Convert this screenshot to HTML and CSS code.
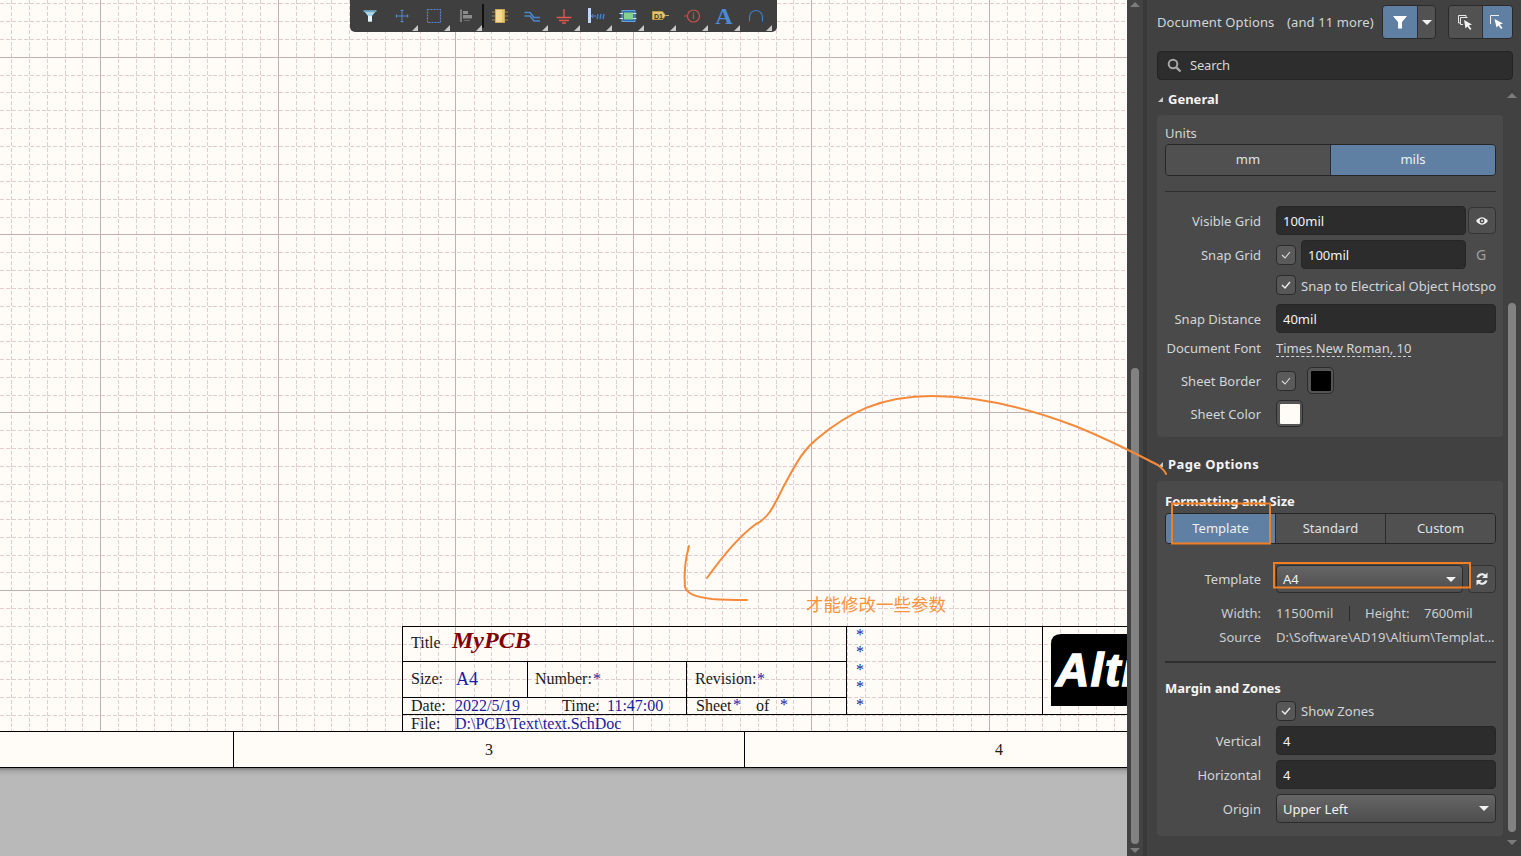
FILE: index.html
```html
<!DOCTYPE html>
<html lang="en">
<head>
<meta charset="utf-8">
<title>Document Options</title>
<link rel="stylesheet" href="styles.css">
</head>
<body>
<div class="app">
  <main class="canvas">
    <svg class="sheet" width="1127" height="768" viewBox="0 0 1127 768">
      <rect class="paper" width="1127" height="768"/>
      <path class="grid-minor" d="M11.5 0V731M29.5 0V731M47.5 0V731M65.5 0V731M82.5 0V731M118.5 0V731M136.5 0V731M154.5 0V731M171.5 0V731M189.5 0V731M207.5 0V731M225.5 0V731M242.5 0V731M260.5 0V731M296.5 0V731M314.5 0V731M331.5 0V731M349.5 0V731M367.5 0V731M385.5 0V731M402.5 0V731M420.5 0V731M438.5 0V731M474.5 0V731M491.5 0V731M509.5 0V731M527.5 0V731M545.5 0V731M562.5 0V731M580.5 0V731M598.5 0V731M616.5 0V731M651.5 0V731M669.5 0V731M687.5 0V731M705.5 0V731M722.5 0V731M740.5 0V731M758.5 0V731M776.5 0V731M793.5 0V731M829.5 0V731M847.5 0V731M865.5 0V731M882.5 0V731M900.5 0V731M918.5 0V731M936.5 0V731M953.5 0V731M971.5 0V731M1007.5 0V731M1025.5 0V731M1042.5 0V731M1060.5 0V731M1078.5 0V731M1096.5 0V731M1114.5 0V731"/>
      <path class="grid-minor" d="M0 3.5H1127M0 21.5H1127M0 39.5H1127M0 75.5H1127M0 92.5H1127M0 110.5H1127M0 128.5H1127M0 146.5H1127M0 164.5H1127M0 181.5H1127M0 199.5H1127M0 217.5H1127M0 252.5H1127M0 270.5H1127M0 288.5H1127M0 306.5H1127M0 324.5H1127M0 341.5H1127M0 359.5H1127M0 377.5H1127M0 395.5H1127M0 430.5H1127M0 448.5H1127M0 466.5H1127M0 484.5H1127M0 501.5H1127M0 519.5H1127M0 537.5H1127M0 555.5H1127M0 572.5H1127M0 608.5H1127M0 626.5H1127M0 644.5H1127M0 661.5H1127M0 679.5H1127M0 697.5H1127M0 715.5H1127"/>
      <path class="grid-major" d="M100.5 0V731M278.5 0V731M455.5 0V731M633.5 0V731M811.5 0V731M989.5 0V731M0 57.5H1127M0 234.5H1127M0 412.5H1127M0 590.5H1127"/>
      <path class="ink" d="M402.5 731V626.5H1127M402.5 661.5H846.5M402.5 697.5H846.5M402.5 714.5H1127M527.5 661.5V697.5M686.5 661.5V714.5M846.5 626.5V714.5M1042.5 626.5V714.5M0 731.5H1127M0 767.5H1127M233.5 731V767M744.5 731V767"/>
      <path class="logo-bg" d="M1061 634H1127V706H1051V644Q1051 634 1061 634Z"/>
      <text class="logo-text" x="1056" y="686">Alti</text>
      <text class="lbl" x="411" y="648">Title</text>
      <text class="doc-title" x="452" y="648">MyPCB</text>
      <text class="lbl" x="411" y="684">Size:</text>
      <text class="val big" x="456" y="685">A4</text>
      <text class="lbl" x="535" y="684">Number:</text>
      <text class="val" x="593" y="684">*</text>
      <text class="lbl" x="695" y="684">Revision:</text>
      <text class="val" x="757" y="684">*</text>
      <text class="lbl" x="411" y="711">Date:</text>
      <text class="val" x="455" y="711">2022/5/19</text>
      <text class="lbl" x="562" y="711">Time:</text>
      <text class="val" x="607" y="711">11:47:00</text>
      <text class="lbl" x="696" y="711">Sheet</text>
      <text class="val" x="733" y="710">*</text>
      <text class="lbl" x="756" y="711">of</text>
      <text class="val" x="780" y="710">*</text>
      <text class="lbl" x="411" y="729">File:</text>
      <text class="val" x="455" y="729">D:\PCB\Text\text.SchDoc</text>
      <text class="val" x="856" y="640">*</text>
      <text class="val" x="856" y="657">*</text>
      <text class="val" x="856" y="675">*</text>
      <text class="val" x="856" y="692">*</text>
      <text class="val" x="856" y="710">*</text>
      <text class="lbl" x="485" y="755">3</text>
      <text class="lbl" x="995" y="755">4</text>
    </svg>
    <div class="desk"></div>
    <nav class="toolbar">
      <span class="tool"><svg width="20" height="20" viewBox="0 0 20 20"><path d="M3.500 4.500H16.500L12 10V15.500H8V10Z" fill="#a8d6e8"/><path d="M8 10H12V15.500H8Z" fill="#e4f3f8"/><path d="M3.500 4.500H16.500V6H3.500Z" fill="#6fa9c4"/></svg></span>
      <span class="tool more"><svg width="20" height="20" viewBox="0 0 20 20"><path d="M10 3.500V16.500M3.500 10H16.500M8.500 4.500H11.500M8.500 15.500H11.500M4.500 8.500V11.500M15.500 8.500V11.500" stroke="#5b86d0" fill="none"/></svg></span>
      <span class="tool more"><svg width="20" height="20" viewBox="0 0 20 20"><rect x="3.500" y="3.500" width="13" height="13" fill="none" stroke="#5b86d0" stroke-width="1.200" stroke-dasharray="2 1"/></svg></span>
      <span class="tool more"><svg width="20" height="20" viewBox="0 0 20 20"><path d="M4 3.500H6V16H4Z" fill="#7d7d7d"/><path d="M7 5H12V8H7ZM7 9H16V12.500H7Z" fill="#8c8c8c"/><path d="M8 14.500H14" stroke="#6c6c6c"/></svg></span>
      <span class="tool-sep"></span>
      <span class="tool"><svg width="20" height="20" viewBox="0 0 20 20"><path d="M2 6H18M2 10H18M2 14H18" stroke="#a08a50"/><rect x="5.500" y="3.500" width="9" height="13" fill="#f7d98e" stroke="#c9a862"/><rect x="12" y="4" width="2" height="12" fill="#e9c26f"/></svg></span>
      <span class="tool more"><svg width="20" height="20" viewBox="0 0 20 20"><path d="M2.500 6.500H8L12 11.500H18M2.500 10H8L12 15H18" stroke="#4a86c8" fill="none" stroke-width="1.700"/></svg></span>
      <span class="tool more"><svg width="20" height="20" viewBox="0 0 20 20"><path d="M10 3V11M2.500 11.500H17.500M5 14.500H15M8 17H12" stroke="#e05a50" fill="none" stroke-width="1.300"/></svg></span>
      <span class="tool more"><svg width="20" height="20" viewBox="0 0 20 20"><rect x="2" y="2" width="3" height="15" fill="#bcd8f6"/><path d="M5 10H10M7 8L5.500 10L7 12" stroke="#5b86d0" fill="none"/><path d="M11 13L12 8M14 13L15 8M17 13L18 8" stroke="#4a7fd0" stroke-width="1.400"/></svg></span>
      <span class="tool more"><svg width="20" height="20" viewBox="0 0 20 20"><rect x="4" y="4.500" width="13" height="11" fill="#2e6fb0" stroke="#6aa0d8"/><rect x="6" y="6.500" width="9" height="7" fill="#86cf8c"/><path d="M1.500 7.500H5M1.500 12.500H5M15 7.500H18.500M15 12.500H18.500" stroke="#cfe6f7"/></svg></span>
      <span class="tool more"><svg width="20" height="20" viewBox="0 0 20 20"><path d="M2.500 5.500H12.500L15.500 9.500L12.500 13.500H2.500Z" fill="#e3c56f" stroke="#b59a4a"/><path d="M15.500 9.500H19" stroke="#c7a95c"/><text class="net-text" x="4" y="12.500">D1</text></svg></span>
      <span class="tool more"><svg width="20" height="20" viewBox="0 0 20 20"><circle cx="11.500" cy="10" r="6" fill="none" stroke="#c9504e" stroke-width="1.200"/><path d="M2 10H5.500M11.500 8.500V13M11.500 6.500V7.700" stroke="#c9504e" stroke-width="1.200"/></svg></span>
      <span class="tool more"><span class="tool-a">A</span></span>
      <span class="tool more"><svg width="20" height="20" viewBox="0 0 20 20"><path d="M3.500 15.500V11A6.500 6.500 0 0 1 16.500 11V15.500" fill="none" stroke="#3f7ec0" stroke-width="1.200"/></svg></span>
    </nav>
  </main>

  <aside class="rail">
    <span class="arrow-up"></span>
    <span class="rail-track"></span>
    <span class="rail-thumb"></span>
    <span class="arrow-down"></span>
  </aside>

  <section class="panel">
    <header class="panel-head">
      <span class="doc-name">Document Options</span>
      <span class="doc-more">(and 11 more)</span>
      <div class="btn-group filter-group">
        <span class="gbtn blue w35"><svg width="16" height="16" viewBox="0 0 16 16"><path d="M1 2H15L10 8V14.500H6V8Z" fill="#fff"/></svg></span>
        <span class="gbtn w18"><span class="caret"></span></span>
      </div>
      <div class="btn-group pick-group">
        <span class="gbtn w33"><svg width="17" height="17" viewBox="0 0 17 17"><path d="M1.500 1.500H9V3M1.500 1.500V9H3M3.500 3.500H10.500M3.500 3.500V10.500H6" fill="none" stroke="#e8e8e8"/><path d="M7 6L15 10.500L11.800 11.500L14.500 15L13 16L10.500 12.500L8.500 14.500Z" fill="#f2f2f2"/></svg></span>
        <span class="gbtn blue grow"><svg width="17" height="17" viewBox="0 0 17 17"><path d="M1.500 10V1.500H10" fill="none" stroke="#f0f0f0"/><path d="M5.500 5L14 9.500L10.800 10.500L13.500 14L12 15L9.500 11.500L7.500 13.500Z" fill="#fff"/></svg></span>
      </div>
    </header>

    <div class="search">
      <svg width="15" height="15" viewBox="0 0 15 15"><circle cx="6" cy="6" r="4.300" fill="none" stroke="#a6a6a6" stroke-width="2"/><path d="M9.300 9.300L13.500 13.500" stroke="#a6a6a6" stroke-width="2.400"/></svg>
      <span class="search-text">Search</span>
    </div>

    <h2 class="sect-head general"><span class="tri"></span>General</h2>
    <div class="box box-general">
      <div class="units-label">Units</div>
      <div class="seg seg-units"><span class="seg-item">mm</span><span class="seg-item on">mils</span></div>
      <div class="divider d-units"></div>

      <div class="row h29 mt14"><span class="lab">Visible Grid</span><span class="field w190">100mil</span><span class="icon-btn"><svg width="14" height="12" viewBox="0 0 14 12"><path d="M1 6Q7 -1.500 13 6Q7 13.500 1 6Z" fill="#eee"/><circle cx="7" cy="6" r="2.400" fill="#4a4a4a"/><circle cx="7" cy="6" r="1" fill="#eee"/></svg></span></div>
      <div class="row h29 mt5"><span class="lab">Snap Grid</span><span class="check dim"><svg width="12" height="10" viewBox="0 0 12 10"><path d="M2 5L5 8L10 2" fill="none" stroke="#ddd" stroke-width="1.100"/></svg></span><span class="field w165 ml5">100mil</span><span class="hotkey">G</span></div>
      <div class="row h20 mt6"><span class="lab"></span><span class="check"><svg width="12" height="10" viewBox="0 0 12 10"><path d="M2 5L5 8L10 2" fill="none" stroke="#eee" stroke-width="1.400"/></svg></span><span class="check-text hot-text">Snap to Electrical Object Hotspo</span></div>
      <div class="row h29 mt9"><span class="lab">Snap Distance</span><span class="field grow">40mil</span></div>
      <div class="row h20 mt5"><span class="lab">Document Font</span><span class="font-link">Times New Roman, 10</span></div>
      <div class="row h27 mt9"><span class="lab">Sheet Border</span><span class="check dim"><svg width="12" height="10" viewBox="0 0 12 10"><path d="M2 5L5 8L10 2" fill="none" stroke="#ddd" stroke-width="1.100"/></svg></span><span class="swatch ml11"><i class="swatch-black"></i></span></div>
      <div class="row h27 mt6"><span class="lab">Sheet Color</span><span class="swatch"><i class="swatch-white"></i></span></div>
    </div>

    <h2 class="sect-head page"><span class="tri"></span>Page Options</h2>
    <div class="box box-page">
      <h3 class="sub-head">Formatting and Size</h3>
      <div class="seg seg-format"><span class="seg-item on">Template</span><span class="seg-item">Standard</span><span class="seg-item">Custom</span></div>

      <div class="row h28 mt21"><span class="lab">Template</span><span class="select w187">A4<span class="caret"></span></span><span class="icon-btn swap"><svg width="14" height="16" viewBox="0 0 14 16"><path d="M1.500 6.500A5.500 5.500 0 0 1 10.500 3.500L12.500 1.500V7H7L9 5A3.300 3.300 0 0 0 4 6.500Z" fill="#eee"/><path d="M12.500 9.500A5.500 5.500 0 0 1 3.500 12.500L1.500 14.500V9H7L5 11A3.300 3.300 0 0 0 10 9.500Z" fill="#eee"/></svg></span></div>
      <div class="row h20 mt10 info"><span class="lab">Width:</span><span class="w-val">11500mil</span><span class="vbar"></span><span class="h-lab">Height:</span><span>7600mil</span></div>
      <div class="row h20 mt4 info"><span class="lab">Source</span><span class="source">D:\Software\AD19\Altium\Templat...</span></div>
      <div class="divider d-page"></div>
      <h3 class="sub-head margin-head">Margin and Zones</h3>
      <div class="row h20 mt4"><span class="lab"></span><span class="check"><svg width="12" height="10" viewBox="0 0 12 10"><path d="M2 5L5 8L10 2" fill="none" stroke="#eee" stroke-width="1.400"/></svg></span><span class="check-text">Show Zones</span></div>
      <div class="row h29 mt5"><span class="lab">Vertical</span><span class="field grow">4</span></div>
      <div class="row h29 mt5"><span class="lab">Horizontal</span><span class="field grow">4</span></div>
      <div class="row h29 mt5"><span class="lab">Origin</span><span class="select grow">Upper Left<span class="caret"></span></span></div>
    </div>

    <div class="pscroll">
      <span class="arrow-up p-up"></span>
      <span class="pscroll-thumb"></span>
      <span class="arrow-down p-down"></span>
    </div>
  </section>

  <svg class="notes" width="1521" height="856" viewBox="0 0 1521 856">
    <path class="pen" d="M707 578C722 557 738 537 756 524C771 517 776 500 786 482C797 462 803 450 818 438C848 413 880 396 932 396C980 396 1030 409 1075 426C1110 440 1140 456 1158 465C1163 469 1165 471 1166 474"/>
    <path class="pen" d="M689 546C685 560 684 575 685 587C687 594 696 597 712 599C725 600 737 600 747 600"/>
    <rect class="mark" x="1172" y="503.500" width="98" height="40"/>
    <rect class="mark" x="1274" y="563" width="196" height="24.500"/>
    <text class="note-text" x="806" y="611">才能修改一些参数</text>
  </svg>
</div>
</body>
</html>
```

FILE: styles.css
```css
* { box-sizing: border-box; }
html, body { margin: 0; padding: 0; }
body { font-family: "Noto Sans", "Open Sans", sans-serif; font-size: 13px; color: #d2d6d9; background: #404040; overflow: hidden; }
.app { position: relative; display: flex; width: 1521px; height: 856px; overflow: hidden; }

/* canvas */
.canvas { position: relative; display: flex; flex-direction: column; flex: none; width: 1127px; height: 856px; }
.sheet { display: block; flex: none; }
.paper { fill: #fffcf8; }
.grid-minor { stroke: #dfcdd1; stroke-width: 1; stroke-dasharray: 4 1.930; fill: none; shape-rendering: crispEdges; }
.grid-major { stroke: #c2b0b5; stroke-width: 1; fill: none; shape-rendering: crispEdges; }
.ink { stroke: #000; stroke-width: 1; fill: none; shape-rendering: crispEdges; }
.logo-bg { fill: #000; }
.logo-text { font: italic 700 46px "Liberation Sans", sans-serif; letter-spacing: 1.500px; fill: #fff; stroke: #fff; stroke-width: 1.500px; }
.lbl, .val { font: 16px "Liberation Serif", serif; }
.lbl { fill: #1a1a1a; }
.val { fill: #1b1ba0; }
.val.big { font-size: 18px; }
.doc-title { font: italic 700 24px "Liberation Serif", serif; fill: #800000; }
.desk { flex: 1; background: linear-gradient(#7d7d7d, #a8a8a8 3px, #b9b9b9 8px); }

/* toolbar */
.toolbar { position: absolute; left: 350px; top: 0; display: flex; width: 427px; height: 32px; padding-left: 4px; background: #3f3f3f; border-radius: 0 0 5px 5px; }
.tool { position: relative; display: flex; align-items: center; justify-content: center; width: 32px; height: 32px; padding-bottom: 1px; }
.tool.more::after { content: ""; position: absolute; right: 0; bottom: 1px; border-left: 6px solid transparent; border-bottom: 6px solid #c8c8c8; }
.tool-sep { width: 2px; height: 24px; margin-top: 4px; background: #111; }
.tool-a { font: 700 24px/24px "Liberation Serif", serif; color: #4c88d6; }
.net-text { font: 700 7px "Liberation Sans", sans-serif; fill: #3a3a20; }

/* rail */
.rail { position: relative; display: flex; flex-direction: column; align-items: center; flex: none; width: 20px; height: 856px; padding: 2px 0; background: #434343; border-right: 4px solid #393939; }
.rail-track { flex: none; height: 361px; }
.rail-thumb { flex: none; width: 8px; height: 476px; background: #828282; border-radius: 4px; }
.arrow-up, .arrow-down { display: block; flex: none; width: 0; height: 0; border-left: 5px solid transparent; border-right: 5px solid transparent; }
.arrow-up { border-bottom: 5px solid #7c7c7c; }
.arrow-down { border-top: 5px solid #7c7c7c; margin-top: 4px; }

/* panel */
.panel { position: relative; flex: 1; min-width: 0; padding: 5px 8px 0 10px; background: #414141; }
.panel-head { display: flex; align-items: center; height: 34px; letter-spacing: .12px; }
.doc-name { width: 130px; }
.doc-more { width: 95px; }
.btn-group { display: flex; height: 34px; border: 1px solid #2a2a2a; border-radius: 4px; overflow: hidden; }
.filter-group { width: 54px; }
.pick-group { width: 65px; margin-left: 12px; }
.gbtn { display: flex; align-items: center; justify-content: center; background: #525252; }
.gbtn.blue { background: #5f80a2; }
.w35 { width: 35px; border-right: 1px solid #2f2f2f; }
.w18 { flex: 1; }
.w33 { width: 34px; border-right: 1px solid #2f2f2f; }
.grow { flex: 1; min-width: 0; }
.caret { display: block; width: 0; height: 0; border-left: 5px solid transparent; border-right: 5px solid transparent; border-top: 5px solid #f2f2f2; }

.search { display: flex; align-items: center; gap: 8px; height: 29px; margin-top: 12px; padding: 0 0 1px 9px; background: #2d2d2d; border: 1px solid #242424; border-radius: 4px; color: #d6d6d6; }
.search-text { letter-spacing: -.2px; padding-bottom: 1px; }

.sect-head { display: flex; align-items: center; height: 18px; margin: 0; font-size: 13px; font-weight: 700; color: #f4f4f4; }
.sect-head.general { margin-top: 10px; }
.sect-head.page { margin-top: 18px; letter-spacing: .4px; }
.tri { width: 0; height: 0; margin: 0 5px 0 1px; border-left: 5px solid transparent; border-bottom: 5px solid #c8c8c8; }

.box { width: 346px; padding: 0 7px 0 8px; background: #4a4a4a; border-radius: 4px; }
.box-general { height: 322px; margin-top: 7px; padding-top: 9px; }
.box-page { height: 355px; margin-top: 8px; padding-top: 11px; }

.units-label { height: 18px; line-height: 18px; }
.seg { display: flex; margin-top: 2px; border: 1px solid #252525; border-radius: 4px; overflow: hidden; }
.seg-units { height: 32px; }
.seg-format { height: 31px; margin-top: 3px; }
.seg-item { display: flex; flex: 1; align-items: center; justify-content: center; padding-bottom: 2px; background: #505050; border-left: 1px solid #2a2a2a; color: #dfe2e4; }
.seg-item:first-child { border-left: 0; }
.seg-item.on { background: #5f80a2; color: #eef1f4; }

.divider { background: #2e2e2e; }
.d-units { height: 1px; margin-top: 15px; }
.d-page { height: 2px; margin-top: 14px; }

.row { display: flex; align-items: center; white-space: nowrap; }
.lab { flex: none; width: 96px; margin-right: 15px; text-align: right; }
.h20 { height: 20px; } .h27 { height: 27px; } .h28 { height: 28px; } .h29 { height: 29px; }
.mt4 { margin-top: 4px; } .mt5 { margin-top: 5px; } .mt6 { margin-top: 6px; } .mt9 { margin-top: 9px; }
.mt10 { margin-top: 10px; } .mt14 { margin-top: 14px; } .mt21 { margin-top: 21px; }
.ml5 { margin-left: 5px; } .ml11 { margin-left: 11px; }

.field { display: flex; align-items: center; height: 100%; padding-left: 6px; background: #2c2c2c; border: 1px solid #262626; border-radius: 4px; color: #f2f2f2; }
.w190 { width: 190px; }
.w165 { width: 165px; }
.w187 { width: 187px; }
.icon-btn { display: flex; align-items: center; justify-content: center; width: 28px; height: 27px; margin-left: 2px; background: #4f4f4f; border: 1px solid #333; border-radius: 4px; }
.icon-btn.swap { height: 28px; margin-left: 5px; }
.check { display: flex; align-items: center; justify-content: center; flex: none; width: 20px; height: 20px; background: #575757; border: 1px solid #2b2b2b; border-radius: 4px; }
.check.dim { background: #5a5a5a; }
.hotkey { margin-left: 10px; font-size: 14px; color: #a0a0a0; }
.check-text { margin-left: 5px; }
.hot-text { padding-top: 2px; }
.source { white-space: nowrap; }
.font-link { border-bottom: 1px dashed #d2d6d9; line-height: 15px; padding-top: 1px; }
.swatch { display: flex; align-items: center; justify-content: center; flex: none; width: 27px; height: 27px; background: #555; border: 1px solid #2b2b2b; border-radius: 5px; }
.swatch i { display: block; width: 20px; height: 20px; border-radius: 1px; }
.swatch-black { background: #000; }
.swatch-white { background: #fffcf8; }

.sub-head { height: 18px; margin: 0; font-size: 13px; line-height: 18px; font-weight: 700; color: #f4f4f4; }
.margin-head { margin-top: 16px; }
.select { display: flex; align-items: center; justify-content: space-between; height: 100%; padding: 0 6px 0 6px; background: linear-gradient(#666, #4d4d4d); border: 1px solid #2b2b2b; border-radius: 4px; color: #f2f2f2; }
.info { color: #c9ced2; }
.w-val { width: 73px; letter-spacing: .2px; }
.vbar { width: 1px; height: 15px; margin-right: 15px; background: #2a2a2a; }
.h-lab { width: 59px; }

.pscroll { position: absolute; right: 5px; top: 93px; display: flex; flex-direction: column; align-items: center; width: 8px; height: 760px; }
.p-up { margin-bottom: 205px; }
.pscroll-thumb { flex: none; width: 8px; height: 529px; background: #828282; border-radius: 4px; }
.p-down { margin-top: 8px; }

/* hand annotations */
.notes { position: absolute; left: 0; top: 0; pointer-events: none; }
.pen { fill: none; stroke: #f58a3a; stroke-width: 2; stroke-linecap: round; }
.mark { fill: none; stroke: #f27e22; stroke-width: 2; }
.note-text { font: 17.500px "Noto Sans CJK SC", sans-serif; fill: #f7933f; }
```
